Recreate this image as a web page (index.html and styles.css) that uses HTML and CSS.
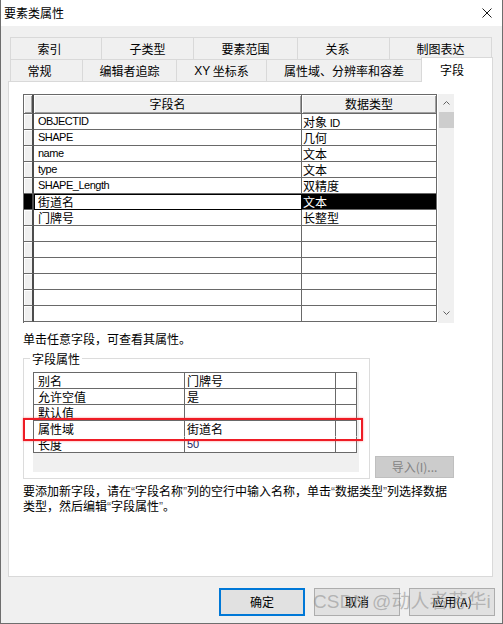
FILE: index.html
```html
<!DOCTYPE html>
<html lang="zh-CN">
<head>
<meta charset="utf-8">
<title>要素类属性</title>
<link rel="stylesheet" href="styles.css">
</head>
<body>
<div class="window">
  <div class="titlebar">
    <span class="title">要素类属性</span>
    <svg class="close" width="10" height="10" viewBox="0 0 10 10"><path d="M0.5 0.5L9.5 9.5M9.5 0.5L0.5 9.5" stroke="#1a1a1a" stroke-width="1" fill="none"/></svg>
  </div>
  <div class="tabs">
    <div class="tabrow">
      <div class="tab t-idx">索引</div>
      <div class="tab t-sub">子类型</div>
      <div class="tab t-ext">要素范围</div>
      <div class="tab t-rel">关系</div>
      <div class="tab t-rep last">制图表达</div>
    </div>
    <div class="tabrow">
      <div class="tab t-gen">常规</div>
      <div class="tab t-edt">编辑者追踪</div>
      <div class="tab t-xy"><span class="en">XY</span>&nbsp;坐标系</div>
      <div class="tab t-dom">属性域、分辨率和容差</div>
      <div class="tab active">字段</div>
    </div>
  </div>
  <div class="panel">
    <div class="grid-wrap">
      <div class="fgrid">
        <div class="frow hd"><div class="c rh"></div><div class="c nm">字段名</div><div class="c tp">数据类型</div></div>
        <div class="frow"><div class="c rh"></div><div class="c nm en">OBJECTID</div><div class="c tp">对象 <span class="en">ID</span></div></div>
        <div class="frow"><div class="c rh"></div><div class="c nm en">SHAPE</div><div class="c tp">几何</div></div>
        <div class="frow"><div class="c rh"></div><div class="c nm en">name</div><div class="c tp">文本</div></div>
        <div class="frow"><div class="c rh"></div><div class="c nm en">type</div><div class="c tp">文本</div></div>
        <div class="frow"><div class="c rh"></div><div class="c nm en">SHAPE_Length</div><div class="c tp">双精度</div></div>
        <div class="frow sel"><div class="c rh"></div><div class="c nm">街道名</div><div class="c tp">文本</div></div>
        <div class="frow"><div class="c rh"></div><div class="c nm">门牌号</div><div class="c tp">长整型</div></div>
        <div class="frow"><div class="c rh"></div><div class="c nm"></div><div class="c tp"></div></div>
        <div class="frow"><div class="c rh"></div><div class="c nm"></div><div class="c tp"></div></div>
        <div class="frow"><div class="c rh"></div><div class="c nm"></div><div class="c tp"></div></div>
        <div class="frow"><div class="c rh"></div><div class="c nm"></div><div class="c tp"></div></div>
        <div class="frow"><div class="c rh"></div><div class="c nm"></div><div class="c tp"></div></div>
        <div class="frow"><div class="c rh"></div><div class="c nm"></div><div class="c tp"></div></div>
      </div>
      <div class="vscroll">
        <div class="arrow up"><svg width="7" height="4" viewBox="0 0 7 4"><path d="M0.5 3.5L3.5 0.5L6.5 3.5" stroke="#606060" fill="none"/></svg></div>
        <div class="thumb"></div>
        <div class="track"></div>
        <div class="arrow down"><svg width="7" height="4" viewBox="0 0 7 4"><path d="M0.5 0.5L3.5 3.5L6.5 0.5" stroke="#606060" fill="none"/></svg></div>
      </div>
    </div>
    <p class="hint">单击任意字段，可查看其属性。</p>
    <div class="prop-row">
      <div class="groupbox">
        <div class="legend">字段属性</div>
        <div class="pgrid-area">
          <div class="pgrid">
            <div class="prow"><div class="pc pk">别名</div><div class="pc pv">门牌号</div><div class="pc px"></div></div>
            <div class="prow"><div class="pc pk">允许空值</div><div class="pc pv">是</div><div class="pc px"></div></div>
            <div class="prow"><div class="pc pk">默认值</div><div class="pc pv"></div><div class="pc px"></div></div>
            <div class="prow hl"><div class="pc pk">属性域</div><div class="pc pv">街道名</div><div class="pc px"></div></div>
            <div class="prow"><div class="pc pk">长度</div><div class="pc pv en">50</div><div class="pc px"></div></div>
          </div>
        </div>
        <div class="redbox"></div>
      </div>
      <button class="btn import" disabled>导入(I)...</button>
    </div>
    <p class="note">要添加新字段，请在<span class="q">“</span>字段名称<span class="q">”</span>列的空行中输入名称，单击<span class="q">“</span>数据类型<span class="q">”</span>列选择数据<br>类型，然后编辑<span class="q">“</span>字段属性<span class="q">”</span>。</p>
  </div>
  <div class="buttons">
    <button class="btn dlg default">确定</button>
    <button class="btn dlg">取消</button>
    <button class="btn dlg">应用(A)</button>
  </div>
  <div class="watermark">CSDN @动人者芳华i</div>
</div>
</body>
</html>
```

FILE: styles.css
```css
body {
  margin: 0;
  font-family: "Noto Sans CJK SC", "Liberation Sans", sans-serif;
  font-size: 12px;
  color: #000;
  background: #fff;
}

.en {
  font-family: "Liberation Sans", "Noto Sans CJK SC", sans-serif;
}

.window {
  position: relative;
  width: 503px;
  height: 624px;
  box-sizing: border-box;
  border: 1px solid #6e6e6e;
  border-top: none;
  background: #f0f0f0;
  display: flex;
  flex-direction: column;
  overflow: hidden;
}

.titlebar {
  height: 26px;
  flex: none;
  background: #fff;
  display: flex;
  align-items: center;
  justify-content: space-between;
  padding: 0 10px 0 3px;
  box-sizing: border-box;
}

.title {
  line-height: 16px;
}

/* tabs */
.tabs {
  margin-top: 11px;
  padding-left: 9px;
  flex: none;
}

.tabrow {
  display: flex;
  height: 22px;
}

.tab {
  box-sizing: border-box;
  height: 22px;
  border-left: 1px solid #d9d9d9;
  border-top: 1px solid #d9d9d9;
  background: #f0f0f0;
  display: flex;
  align-items: center;
  justify-content: center;
  white-space: nowrap;
  line-height: 16px;
}

.tab.last {
  border-right: 1px solid #d9d9d9;
}

.t-idx { width: 91px; padding-right: 13px; }
.t-sub { width: 92px; }
.t-ext { width: 104px; }
.t-rel { width: 92px; padding-right: 12px; }
.t-rep { width: 103px; }
.t-gen { width: 72px; padding-right: 14px; }
.t-edt { width: 94px; }
.t-xy { width: 90px; }
.t-dom { width: 155px; }

.tab.active {
  width: 72px;
  height: 25px;
  margin-top: -2px;
  padding-right: 10px;
  background: #fff;
  border-right: 1px solid #d9d9d9;
  position: relative;
  z-index: 1;
}

/* panel */
.panel {
  margin-left: 7px;
  width: 485px;
  height: 496px;
  flex: none;
  box-sizing: border-box;
  border: 1px solid #d9d9d9;
  background: #fff;
  padding: 12px 0 0 14px;
}

.grid-wrap {
  display: flex;
}

.fgrid {
  width: 414px;
  box-sizing: border-box;
  border-left: 1px solid #696969;
  border-top: 1px solid #696969;
}

.frow {
  display: flex;
  height: 16px;
}

.frow.hd {
  height: 19px;
}

.c {
  box-sizing: border-box;
  height: 100%;
  border-right: 1px solid #696969;
  border-bottom: 1px solid #696969;
  line-height: 15px;
  white-space: nowrap;
  overflow: hidden;
}

.c.en,
.c .en {
  font-size: 11px;
  letter-spacing: -0.5px;
}

.c.rh {
  width: 10px;
  background: #f0f0f0;
  border-right: 2px solid #4c4c4c;
  box-shadow: inset 1px 1px 0 #fff;
}

.c.nm {
  width: 268px;
  padding-left: 4px;
}

.c.tp {
  width: 135px;
  padding-left: 1px;
}

.frow.hd .c {
  background: #f0f0f0;
  box-shadow: inset 1px 1px 0 #fff, inset -1px -1px 0 #a0a0a0;
  text-align: center;
  line-height: 18px;
  padding-left: 0;
}

.frow.sel .c.rh {
  background: #000;
  box-shadow: none;
}

.frow.sel .c.nm {
  border-color: #000;
  box-shadow: inset 1px 1px 0 #000;
}

.frow.sel .c.tp {
  background: #000;
  color: #fff;
}

.vscroll {
  width: 16px;
  height: 229px;
  margin-left: 1px;
  background: #f0f0f0;
  display: flex;
  flex-direction: column;
  align-items: center;
}

.arrow {
  height: 17px;
  width: 16px;
  display: flex;
  align-items: center;
  justify-content: center;
  flex: none;
}

.thumb {
  width: 15px;
  height: 16px;
  background: #cdcdcd;
  flex: none;
  margin-top: 1px;
}

.track {
  flex: 1;
}

.arrow.down {
  height: 15px;
  align-items: flex-start;
  padding-top: 3px;
  box-sizing: border-box;
}

.hint {
  margin: 8px 0 0;
  line-height: 16px;
}

/* field properties */
.prop-row {
  display: flex;
  align-items: flex-end;
  margin-top: 11px;
}

.groupbox {
  position: relative;
  width: 347px;
  height: 121px;
  box-sizing: border-box;
  border: 1px solid #dcdcdc;
  padding-left: 9px;
}

.legend {
  display: block;
  width: fit-content;
  height: 16px;
  line-height: 16px;
  margin: -8px 0 0 -3px;
  padding: 0 2px;
  background: #fff;
}

.pgrid-area {
  width: 326px;
  height: 100px;
  margin-top: 5px;
  background: #f0f0f0;
}

.pgrid {
  width: 324px;
  box-sizing: border-box;
  border-left: 1px solid #696969;
  border-top: 1px solid #696969;
  background: #fff;
}

.prow {
  display: flex;
  height: 16px;
}

.pc {
  box-sizing: border-box;
  height: 16px;
  border-right: 1px solid #696969;
  border-bottom: 1px solid #696969;
  line-height: 15px;
  white-space: nowrap;
}

.pk { width: 151px; padding-left: 4px; }
.pv { width: 151px; padding-left: 2px; }
.px { width: 21px; }

.pv.en {
  font-size: 11px;
  color: #1a1a60;
}

.prow.hl .pc {
  border-bottom-color: transparent;
}

.redbox {
  position: absolute;
  left: -1px;
  top: 59px;
  width: 340px;
  height: 23px;
  box-sizing: border-box;
  border: 2px solid #ee1c25;
  box-shadow: 0 0 2px rgba(255, 60, 60, 0.6);
  pointer-events: none;
}

.btn {
  font-family: "Noto Sans CJK SC", "Liberation Sans", sans-serif;
  font-size: 12px;
  box-sizing: border-box;
  background: #e1e1e1;
  border: 1px solid #adadad;
  color: #000;
  padding: 0;
  line-height: 16px;
  margin: 0;
}

.btn.import {
  width: 79px;
  height: 22px;
  margin-left: 5px;
  margin-bottom: 1px;
  background: #cccccc;
  border-color: #bfbfbf;
  color: #838383;
}

.note {
  margin: 5px 0 0;
  line-height: 14px;
}

.q {
  font-family: "Liberation Sans", sans-serif;
  color: #555;
}

/* dialog buttons */
.buttons {
  display: flex;
  justify-content: flex-end;
  gap: 9px;
  margin-top: 11px;
  padding-right: 7px;
}

.btn.dlg {
  width: 86px;
  height: 28px;
}

.btn.dlg.default {
  border: 2px solid #0078d7;
}

.watermark {
  position: absolute;
  left: 312px;
  top: 590px;
  font-family: "Liberation Sans", "Noto Sans CJK SC", sans-serif;
  font-size: 19px;
  line-height: 24px;
  color: rgba(140, 140, 140, 0.55);
  white-space: nowrap;
  pointer-events: none;
}
```
